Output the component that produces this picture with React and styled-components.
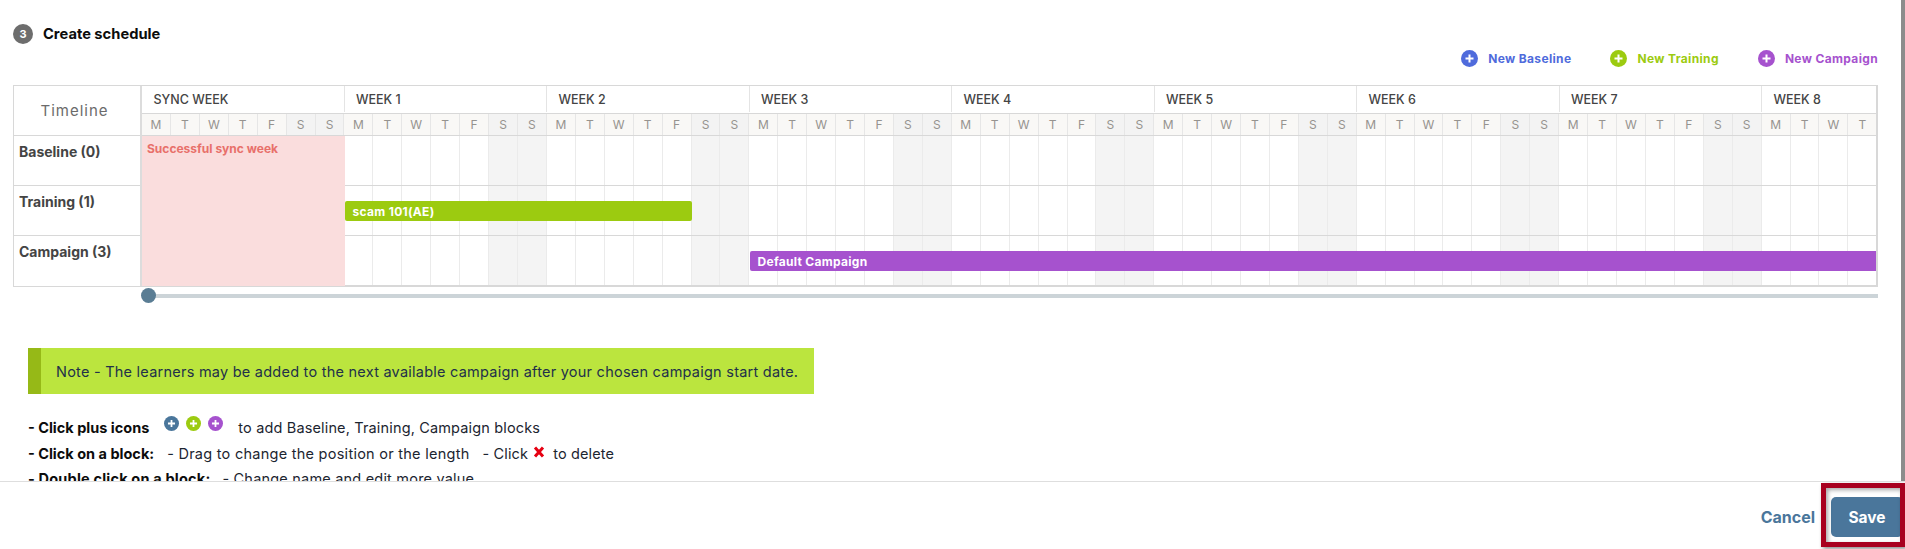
import React from 'react'
import styled, { createGlobalStyle } from 'styled-components'

const WEEK_W = 202.5
const DAY_W = WEEK_W / 7
const FONT = `Inter, 'Noto Sans', sans-serif`

const WEEKS = ['SYNC WEEK', 'WEEK 1', 'WEEK 2', 'WEEK 3', 'WEEK 4', 'WEEK 5', 'WEEK 6', 'WEEK 7', 'WEEK 8']
const LETTERS = ['M', 'T', 'W', 'T', 'F', 'S', 'S']
const DAYS = Array.from({ length: 60 }, (_, i) => LETTERS[i % 7])

const GlobalStyle = createGlobalStyle`
  html, body {
    margin: 0;
    padding: 0;
    background: #fff;
    overflow: hidden;
  }
  * { box-sizing: border-box; }
`

const Page = styled.div`
  width: 1905px;
  height: 549px;
  display: flex;
  flex-direction: column;
  font-family: ${FONT};
  color: #1c2530;
`

const Main = styled.div`
  display: flex;
  height: 481px;
`

const Content = styled.div`
  flex: 1;
  min-width: 0;
  overflow: hidden;
  padding: 24px 23px 0 13px;
`

const ScrollBar = styled.div`
  width: 4px;
  background: #8c8c8c;
`

const Title = styled.div`
  display: flex;
  align-items: center;
  gap: 10px;
  height: 20px;
  font-size: 14.7px;
  font-weight: 700;
  color: #0c0c0c;
`

const StepBadge = styled.span`
  width: 20px;
  height: 20px;
  border-radius: 50%;
  background: #6d6d6d;
  color: #fff;
  font-size: 11px;
  font-weight: 700;
  display: flex;
  align-items: center;
  justify-content: center;
`

const Legend = styled.div`
  display: flex;
  justify-content: flex-end;
  margin: 6px 0 18px;
  height: 17px;
`

const LegendItem = styled.div`
  display: flex;
  align-items: center;
  gap: 10px;
  margin-left: 39px;
  font-size: 12px;
  font-weight: 700;
  letter-spacing: 0.35px;
  color: ${p => p.$color};
`

const Table = styled.div`
  display: flex;
  height: 202px;
  border: 1px solid #d8d8d8;
  border-right-width: 2px;
`

const LabelColumn = styled.div`
  width: 128px;
  flex: none;
  border-right: 2px solid #dcdcdc;
`

const TimelineHead = styled.div`
  height: 50px;
  padding-right: 5px;
  display: flex;
  align-items: center;
  justify-content: center;
  font-size: 15px;
  letter-spacing: 1px;
  color: #6b6b6b;
  border-bottom: 1px solid #d8d8d8;
`

const RowLabel = styled.div`
  height: 50px;
  padding: 7px 5px 0;
  font-size: 14px;
  font-weight: 700;
  color: #444;
  border-bottom: 1px solid #d8d8d8;
  &:last-child { border-bottom: 0; }
`

const Chart = styled.div`
  flex: 1;
  min-width: 0;
  position: relative;
  overflow: hidden;
`

const WeekRow = styled.div`
  display: flex;
  height: 28px;
  border-bottom: 1px solid #d8d8d8;
`

const WeekCell = styled.div`
  flex: none;
  width: ${WEEK_W}px;
  height: 26px;
  padding-left: 11.5px;
  display: flex;
  align-items: center;
  font-size: 12.5px;
  font-weight: 500;
  color: #444;
  border-right: 1px solid #e4e4e4;
`

const DayRow = styled.div`
  display: flex;
  height: 22px;
  border-bottom: 1px solid #d8d8d8;
`

const DayCell = styled.div`
  flex: none;
  width: ${DAY_W}px;
  display: flex;
  align-items: center;
  justify-content: center;
  font-size: 12px;
  color: #96938f;
  background: ${p => (p.$weekend ? '#f3f3f3' : '#f9f8f6')};
  border-right: 1px solid #e6e6e6;
`

const Lane = styled.div`
  position: relative;
  display: flex;
  height: 50px;
  border-bottom: 1px solid #d8d8d8;
  &:last-child { border-bottom: 0; }
`

const LaneCell = styled.div`
  flex: none;
  width: ${DAY_W}px;
  background: ${p => (p.$weekend ? '#f4f4f4' : '#fff')};
  border-right: 1px solid #ebebeb;
`

const SyncBlock = styled.div`
  position: absolute;
  left: 0;
  top: 50px;
  width: ${WEEK_W}px;
  bottom: 0;
  padding: 5px 5px;
  background: #fadddd;
  color: #e8706a;
  font-size: 12px;
  font-weight: 700;
`

const Bar = styled.div`
  position: absolute;
  top: 15px;
  left: ${p => p.$start * DAY_W}px;
  width: ${p => p.$days * DAY_W}px;
  height: 20px;
  padding-left: 8px;
  display: flex;
  align-items: center;
  border-radius: 2px;
  background: ${p => p.$color};
  color: #fff;
  font-size: 12px;
  font-weight: 700;
  letter-spacing: 0.3px;
`

const Slider = styled.div`
  position: relative;
  height: 15px;
  margin: 1px 0 0 129px;
  display: flex;
  align-items: center;
`

const SliderTrack = styled.div`
  flex: 1;
  height: 4px;
  background: #ccd4d8;
`

const SliderThumb = styled.span`
  position: absolute;
  left: -1px;
  top: 0;
  width: 15px;
  height: 15px;
  border-radius: 50%;
  background: #5a7d94;
`

const Note = styled.div`
  width: 786px;
  height: 46px;
  margin: 45px 0 0 15px;
  padding-left: 15px;
  display: flex;
  align-items: center;
  background: #bbe53e;
  border-left: 13px solid #96b917;
  font-size: 14.5px;
  letter-spacing: 0.24px;
  color: #22304a;
  white-space: nowrap;
`

const Help = styled.div`
  margin: 19px 0 0 15px;
  font-size: 14.5px;
  letter-spacing: 0.15px;
  color: #1c2530;
`

const HelpLine = styled.div`
  display: flex;
  align-items: center;
  height: ${p => p.$h}px;
  white-space: pre;
`

const HelpBold = styled.b`
  font-weight: 700;
  letter-spacing: ${p => p.$spacing || 0}px;
  color: #0c0c0c;
  margin-right: ${p => p.$gap || 0}px;
`

const HelpText = styled.span`
  letter-spacing: ${p => p.$spacing || 0.15}px;
  margin-right: ${p => p.$gap || 0}px;
`

const IconGroup = styled.span`
  display: flex;
  gap: 7px;
  margin: 0 15px 7px 15px;
`

const DeleteIcon = styled.svg`
  width: 12px;
  height: 12px;
  margin: 0 8px 4px 5px;
`

const Footer = styled.div`
  position: relative;
  flex: 1;
  overflow: hidden;
  display: flex;
  align-items: center;
  justify-content: flex-end;
  gap: 16px;
  padding: 3px 2px 0 0;
  border-top: 1px solid #dedede;
`

const CancelLink = styled.span`
  font-size: 16px;
  font-weight: 700;
  color: #4a769b;
`

const SaveButton = styled.button`
  width: 72px;
  height: 40px;
  border: 0;
  border-radius: 5px;
  background: #4a769b;
  color: #fff;
  font-family: ${FONT};
  font-size: 15.5px;
  font-weight: 700;
`

const Highlight = styled.div`
  position: absolute;
  right: 0;
  top: 1px;
  width: 84px;
  height: 64px;
  border: 5px solid #a8001f;
  box-shadow: 2px 2px 4px rgba(0, 0, 0, 0.45), inset 2px 2px 4px rgba(0, 0, 0, 0.35);
`

const PlusIcon = ({ color, size = 17 }) => (
  <svg width={size} height={size} viewBox="0 0 17 17">
    <circle cx="8.5" cy="8.5" r="8.5" fill={color} />
    <path d="M8.5 4.5v8M4.5 8.5h8" stroke="#fff" strokeWidth="2" />
  </svg>
)

const LaneCells = () =>
  DAYS.map((_, i) => <LaneCell key={i} $weekend={i % 7 > 4} />)

const App = () => {
  return (
    <Page>
      <GlobalStyle />
      <Main>
        <Content>
          <Title>
            <StepBadge>3</StepBadge>
            Create schedule
          </Title>
          <Legend>
            <LegendItem $color="#4f6bdc"><PlusIcon color="#4f6bdc" />New Baseline</LegendItem>
            <LegendItem $color="#9ccb10"><PlusIcon color="#9ccb10" />New Training</LegendItem>
            <LegendItem $color="#a652ce"><PlusIcon color="#a652ce" />New Campaign</LegendItem>
          </Legend>

          <Table>
            <LabelColumn>
              <TimelineHead>Timeline</TimelineHead>
              <RowLabel>Baseline (0)</RowLabel>
              <RowLabel>Training (1)</RowLabel>
              <RowLabel>Campaign (3)</RowLabel>
            </LabelColumn>
            <Chart>
              <WeekRow>
                {WEEKS.map(w => <WeekCell key={w}>{w}</WeekCell>)}
              </WeekRow>
              <DayRow>
                {DAYS.map((d, i) => <DayCell key={i} $weekend={i % 7 > 4}>{d}</DayCell>)}
              </DayRow>
              <Lane><LaneCells /></Lane>
              <Lane>
                <LaneCells />
                <Bar $start={7} $days={12} $color="#9ccb10">scam 101(AE)</Bar>
              </Lane>
              <Lane>
                <LaneCells />
                <Bar $start={21} $days={39} $color="#a652ce">Default Campaign</Bar>
              </Lane>
              <SyncBlock>Successful sync week</SyncBlock>
            </Chart>
          </Table>
          <Slider>
            <SliderTrack />
            <SliderThumb />
          </Slider>

          <Note>Note - The learners may be added to the next available campaign after your chosen campaign start date.</Note>

          <Help>
            <HelpLine $h={28}>
              <HelpBold>- Click plus icons</HelpBold>
              <IconGroup>
                <PlusIcon color="#4a769b" size={15} />
                <PlusIcon color="#9ccb10" size={15} />
                <PlusIcon color="#a652ce" size={15} />
              </IconGroup>
              to add Baseline, Training, Campaign blocks
            </HelpLine>
            <HelpLine $h={25}>
              <HelpBold $gap={13}>- Click on a block:</HelpBold>
              <HelpText $gap={13} $spacing={0.26}>- Drag to change the position or the length</HelpText>
              - Click
              <DeleteIcon viewBox="0 0 12 12">
                <path d="M2 1.5l8 9M10 1.5l-8 9" stroke="#e60012" strokeWidth="3" />
              </DeleteIcon>
              to delete
            </HelpLine>
            <HelpLine $h={25}>
              <HelpBold $gap={12} $spacing={0.19}>- Double click on a block:</HelpBold>
              <HelpText $spacing={0.2}>- Change name and edit more value</HelpText>
            </HelpLine>
          </Help>
        </Content>
        <ScrollBar />
      </Main>
      <Footer>
        <CancelLink>Cancel</CancelLink>
        <SaveButton>Save</SaveButton>
        <Highlight />
      </Footer>
    </Page>
  )
}

export default App
